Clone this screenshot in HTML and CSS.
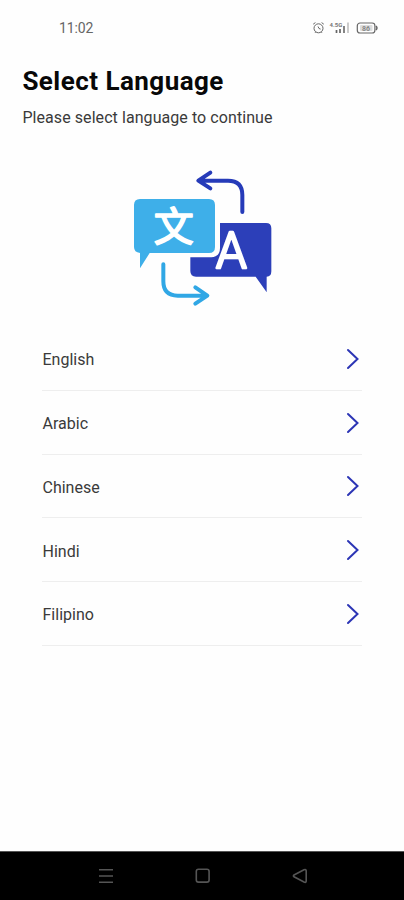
FILE: index.html
```
<!DOCTYPE html>
<html lang="en">
<head>
<meta charset="utf-8">
<title>Select Language</title>
<link rel="stylesheet" href="styles.css">
</head>
<body>
<div class="screen">
  <div class="status">
    <span class="time">11:02</span>
    <svg class="status-icons" width="68" height="14" viewBox="0 0 68 14" fill="none" stroke="#666">
      <circle cx="6.5" cy="7.3" r="4.5"/>
      <path d="M1.2 3.2 3.4 1.6M11.8 3.2 9.6 1.6M6 5.5l1 2 1.6 .6M3 11.8l1-1M10 11.8l-1-1"/>
      <text x="17.5" y="5.8" class="net">4.5G</text>
      <path d="M24.5 9v3M28 8v4" stroke-width="1.7"/>
      <path d="M32 5v7" stroke-width="1.6"/>
      <path d="M36 1.5V12" stroke="#999"/>
      <rect x="45.3" y="2" width="17.6" height="10" rx="2.8" stroke-width="1.2"/>
      <path d="M64 5q2 2 0 4" stroke-width="1.4"/>
      <rect x="48" y="4" width="12.5" height="6" rx="1" fill="#ddd" stroke="none"/>
      <text x="50" y="9.6" class="charge">86</text>
    </svg>
  </div>
  <header class="head">
    <h1>Select Language</h1>
    <p>Please select language to continue</p>
  </header>
  <svg class="art" width="160" height="155" viewBox="0 0 480 465">
    <path fill="#2c3fb9" d="M294 189H432Q448 189 448 205V334Q448 350 434 350V397L401 350H222Q205 350 205 333V292H268Q294 290 294 264Z"/>
    <path fill="#3eafe9" d="M54 117H261Q279 117 279 135V261Q279 279 261 279H83L54 325V279Q36 277 36 261V135Q36 117 54 117Z"/>
    <text class="han" x="95" y="243">文</text>
    <text class="latin" x="282" y="323" textLength="92" lengthAdjust="spacingAndGlyphs">A</text>
    <g fill="none" stroke-width="12" stroke-linecap="round" stroke-linejoin="round">
      <path stroke="#263bb9" d="M361 156V105Q361 62 318 62H230M265 38 229 62 265 85"/>
      <path stroke="#30a7e5" d="M124 313V364Q124 407 167 407H254M220 382 256 407 220 431"/>
    </g>
  </svg>
  <ul class="list">
    <li><span>English</span><svg class="chev" viewBox="0 0 14 22"><path d="M2 2 11.5 11 2 20"/></svg></li>
    <li><span>Arabic</span><svg class="chev" viewBox="0 0 14 22"><path d="M2 2 11.5 11 2 20"/></svg></li>
    <li><span>Chinese</span><svg class="chev" viewBox="0 0 14 22"><path d="M2 2 11.5 11 2 20"/></svg></li>
    <li><span>Hindi</span><svg class="chev" viewBox="0 0 14 22"><path d="M2 2 11.5 11 2 20"/></svg></li>
    <li><span>Filipino</span><svg class="chev" viewBox="0 0 14 22"><path d="M2 2 11.5 11 2 20"/></svg></li>
  </ul>
  <nav class="nav">
    <svg width="16" height="16" viewBox="0 0 16 16"><path d="M1 1.7h14M1 8h14M1 14.3h14"/></svg>
    <svg width="16" height="16" viewBox="0 0 16 16"><rect x="1.3" y="1.3" width="12.8" height="12.8" rx="2.2"/></svg>
    <svg width="16" height="16" viewBox="0 0 16 16"><path d="M2 7 12 1.8Q14.2 1 14.2 3V13Q14.2 15 12 14L2 8.8Q.8 7.9 2 7Z"/></svg>
  </nav>
</div>
</body>
</html>
```
FILE: styles.css
```
* { box-sizing: border-box; }
body { margin: 0; background: #fff; font-family: Roboto, "Liberation Sans", sans-serif; color: #3a3a3a; }
.screen { width: 404px; height: 900px; display: flex; flex-direction: column; background: #fefefe; }
.status { height: 55px; padding: 0 24px 0 59px; display: flex; align-items: center; justify-content: space-between; }
.time { font-size: 14px; letter-spacing: -0.1px; color: #666; }
.status-icons { display: block; }
.net { font: 700 6px Roboto, sans-serif; fill: #777; stroke: none; }
.charge { font: 700 7px Roboto, sans-serif; fill: #888; stroke: none; }
.head { height: 105px; padding: 8.5px 22px 0 22.4px; }
h1 { margin: 0; font-size: 26px; line-height: 34px; font-weight: 700; letter-spacing: 0.46px; color: #080808; white-space: nowrap; }
.head p { margin: 10.5px 0 0; font-size: 16px; line-height: 20px; letter-spacing: 0.07px; white-space: nowrap; }
.art { display: block; margin-left: 122px; flex: none; }
.han { font: 400 120px "Noto Sans CJK SC", sans-serif; fill: #fff; stroke: #fff; stroke-width: 5; stroke-linejoin: round; }
.latin { font: 300 150px Roboto, sans-serif; fill: #fff; stroke: #fff; stroke-width: 8; stroke-linejoin: round; }
.list { list-style: none; margin: 12px 42px 0; padding: 0; }
.list li { height: 63.8px; padding: 1px 2px 0 0; display: flex; align-items: center; justify-content: space-between; border-bottom: 1px solid #eee; font-size: 16px; }
.list span { padding: 1.5px 0 0 0.5px; }
.chev { width: 14px; height: 22px; fill: none; stroke: #2c35b5; stroke-width: 2; stroke-linecap: round; }
.nav { margin-top: auto; height: 49px; padding: 0 96px 0 98px; display: flex; align-items: center; justify-content: space-between; background: #000; border-top: 1px solid #555; }
.nav svg { fill: none; stroke: #555; stroke-width: 1.6; }
```
